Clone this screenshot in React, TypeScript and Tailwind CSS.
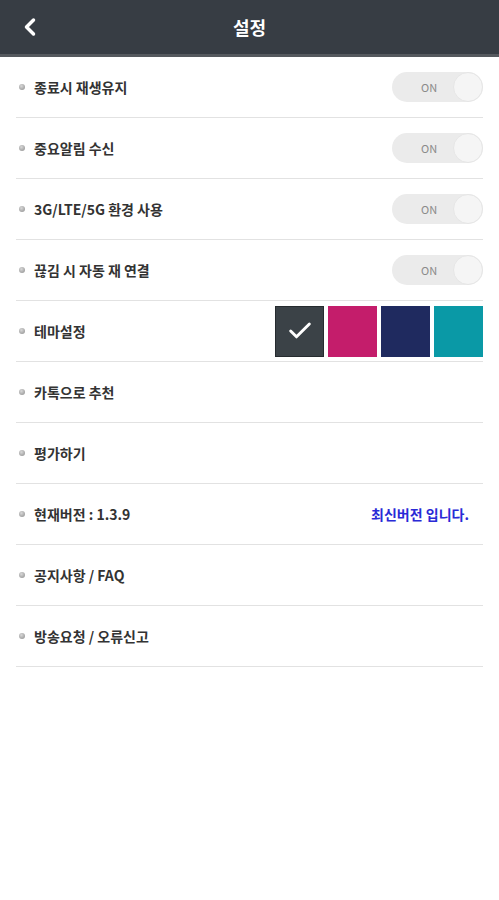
import { Check, ChevronLeft } from "lucide-react";

const FONT = { fontFamily: '"Noto Sans CJK KR", "Noto Sans", sans-serif' };

type Row =
  | { label: string; kind: "toggle" }
  | { label: string; kind: "theme" }
  | { label: string; kind: "plain" }
  | { label: string; kind: "version"; note: string };

const ROWS: Row[] = [
  { label: "종료시 재생유지", kind: "toggle" },
  { label: "중요알림 수신", kind: "toggle" },
  { label: "3G/LTE/5G 환경 사용", kind: "toggle" },
  { label: "끊김 시 자동 재 연결", kind: "toggle" },
  { label: "테마설정", kind: "theme" },
  { label: "카톡으로 추천", kind: "plain" },
  { label: "평가하기", kind: "plain" },
  { label: "현재버전 : 1.3.9", kind: "version", note: "최신버전 입니다." },
  { label: "공지사항 / FAQ", kind: "plain" },
  { label: "방송요청 / 오류신고", kind: "plain" },
];

function Toggle() {
  return (
    <div className="flex h-[30px] w-[91px] items-center justify-between rounded-full bg-[#ebebeb] pl-[29px]">
      <span className="text-[11px] text-[#8a8a8a]">ON</span>
      <span className="size-[30px] rounded-full border border-[#e6e6e6] bg-[#f5f5f5]" />
    </div>
  );
}

function ThemePicker() {
  return (
    <div className="flex gap-[4px]">
      <div className="flex h-[51px] w-[49px] items-center justify-center border border-[#262b2f] bg-[#3b4247]">
        <Check className="size-7 text-white" strokeWidth={2.5} />
      </div>
      <div className="h-[51px] w-[49px] bg-[#c41d6b]" />
      <div className="h-[51px] w-[49px] bg-[#1f2a5f]" />
      <div className="h-[51px] w-[49px] bg-[#0a99a6]" />
    </div>
  );
}

export default function App() {
  return (
    <div className="min-h-[900px] w-[499px] bg-white" style={FONT}>
      <header className="relative flex h-[57px] items-center justify-center border-b-[3px] border-[#55595e] bg-[#373d44]">
        <ChevronLeft className="absolute left-[16px] top-[13px] size-[28px] text-white" strokeWidth={3} />
        <h1 className="text-[18px] font-bold text-white">설정</h1>
      </header>
      <ul className="px-[16px]">
        {ROWS.map((row) => (
          <li
            key={row.label}
            className="flex h-[61px] items-center justify-between border-b border-[#e2e2e2]"
          >
            <div className="flex items-center gap-[9px] pl-[3px]">
              <span className="size-[6px] rounded-full bg-[radial-gradient(circle_at_40%_35%,#d8d8d8,#8c8c8c)]" />
              <span className="text-[14px] font-bold text-[#333]">{row.label}</span>
            </div>
            {row.kind === "toggle" && <Toggle />}
            {row.kind === "theme" && <ThemePicker />}
            {row.kind === "version" && (
              <span className="pr-[14px] text-[14px] font-bold text-[#2a2ad6]">{row.note}</span>
            )}
          </li>
        ))}
      </ul>
    </div>
  );
}
